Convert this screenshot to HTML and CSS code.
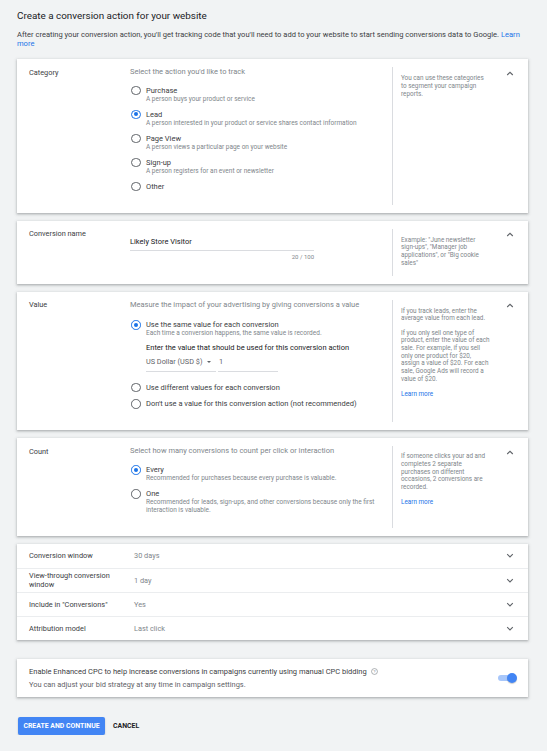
FILE: index.html
```html
<!DOCTYPE html>
<html>
<head>
<meta charset="utf-8">
<link rel="stylesheet" href="styles.css">
</head>
<body>
<div class="page">
  <h1 class="title">Create a conversion action for your website</h1>
  <p class="intro">After creating your conversion action, you'll get tracking code that you'll need to add to your website to start sending conversions data to Google. <a class="link">Learn</a><br><a class="link">more</a></p>

  <section class="card section">
    <div class="label">Category</div>
    <div class="content">
      <div class="prompt">Select the action you'd like to track</div>
      <div class="options opts-cat">
        <div class="option"><span class="radio"></span><div><div class="opt-title">Purchase</div><div class="opt-desc">A person buys your product or service</div></div></div>
        <div class="option"><span class="radio on"></span><div><div class="opt-title">Lead</div><div class="opt-desc">A person interested in your product or service shares contact information</div></div></div>
        <div class="option"><span class="radio"></span><div><div class="opt-title">Page View</div><div class="opt-desc">A person views a particular page on your website</div></div></div>
        <div class="option"><span class="radio"></span><div><div class="opt-title">Sign-up</div><div class="opt-desc">A person registers for an event or newsletter</div></div></div>
        <div class="option"><span class="radio"></span><div><div class="opt-title">Other</div></div></div>
      </div>
    </div>
    <div class="helper helper-cat"><p>You can use these categories<br>to segment your campaign<br>reports.</p></div>
    <div class="chev"><svg viewBox="0 0 8 5" width="8" height="5"><polyline points="1.2,4 4,1.3 6.8,4" fill="none" stroke="#5f6368" stroke-width="1.1"/></svg></div>
  </section>

  <section class="card section">
    <div class="label">Conversion name</div>
    <div class="content content-name">
      <div class="name-input">Likely Store Visitor</div>
      <div class="counter">20 / 100</div>
    </div>
    <div class="helper helper-name"><p>Example: "June newsletter<br>sign-ups", "Manager job<br>applications", or "Big cookie<br>sales"</p></div>
    <div class="chev"><svg viewBox="0 0 8 5" width="8" height="5"><polyline points="1.2,4 4,1.3 6.8,4" fill="none" stroke="#5f6368" stroke-width="1.1"/></svg></div>
  </section>

  <section class="card section">
    <div class="label">Value</div>
    <div class="content">
      <div class="prompt">Measure the impact of your advertising by giving conversions a value</div>
      <div class="options opts-val">
        <div class="option"><span class="radio on"></span><div>
          <div class="opt-title">Use the same value for each conversion</div>
          <div class="opt-desc">Each time a conversion happens, the same value is recorded.</div>
          <div class="enter">Enter the value that should be used for this conversion action</div>
          <div class="value-row">
            <div class="currency">US Dollar (USD $)<span class="caret"></span></div>
            <div class="amount">1</div>
          </div>
        </div></div>
        <div class="option first-single"><span class="radio"></span><div class="opt-title">Use different values for each conversion</div></div>
        <div class="option"><span class="radio"></span><div class="opt-title">Don't use a value for this conversion action (not recommended)</div></div>
      </div>
    </div>
    <div class="helper helper-val">
      <p>If you track leads, enter the<br>average value from each lead.</p>
      <p class="para-gap">If you only sell one type of<br>product, enter the value of each<br>sale. For example, if you sell<br>only one product for $20,<br>assign a value of $20. For each<br>sale, Google Ads will record a<br>value of $20.</p>
      <p class="more-gap"><a class="link">Learn more</a></p>
    </div>
    <div class="chev"><svg viewBox="0 0 8 5" width="8" height="5"><polyline points="1.2,4 4,1.3 6.8,4" fill="none" stroke="#5f6368" stroke-width="1.1"/></svg></div>
  </section>

  <section class="card section">
    <div class="label">Count</div>
    <div class="content">
      <div class="prompt">Select how many conversions to count per click or interaction</div>
      <div class="options opts-count">
        <div class="option"><span class="radio on"></span><div><div class="opt-title">Every</div><div class="opt-desc">Recommended for purchases because every purchase is valuable.</div></div></div>
        <div class="option"><span class="radio"></span><div><div class="opt-title">One</div><div class="opt-desc">Recommended for leads, sign-ups, and other conversions because only the first interaction is valuable.</div></div></div>
      </div>
    </div>
    <div class="helper helper-count">
      <p>If someone clicks your ad and<br>completes 2 separate<br>purchases on different<br>occasions, 2 conversions are<br>recorded.</p>
      <p class="more-gap2"><a class="link">Learn more</a></p>
    </div>
    <div class="chev"><svg viewBox="0 0 8 5" width="8" height="5"><polyline points="1.2,4 4,1.3 6.8,4" fill="none" stroke="#5f6368" stroke-width="1.1"/></svg></div>
  </section>

  <section class="card settings">
    <div class="row"><div class="row-label">Conversion window</div><div class="row-value">30 days</div><div class="row-chev"><svg viewBox="0 0 8 5" width="8" height="5"><polyline points="1.2,1.2 4,3.9 6.8,1.2" fill="none" stroke="#5f6368" stroke-width="1.1"/></svg></div></div>
    <div class="row"><div class="row-label">View-through conversion window</div><div class="row-value">1 day</div><div class="row-chev"><svg viewBox="0 0 8 5" width="8" height="5"><polyline points="1.2,1.2 4,3.9 6.8,1.2" fill="none" stroke="#5f6368" stroke-width="1.1"/></svg></div></div>
    <div class="row"><div class="row-label">Include in "Conversions"</div><div class="row-value">Yes</div><div class="row-chev"><svg viewBox="0 0 8 5" width="8" height="5"><polyline points="1.2,1.2 4,3.9 6.8,1.2" fill="none" stroke="#5f6368" stroke-width="1.1"/></svg></div></div>
    <div class="row"><div class="row-label">Attribution model</div><div class="row-value">Last click</div><div class="row-chev"><svg viewBox="0 0 8 5" width="8" height="5"><polyline points="1.2,1.2 4,3.9 6.8,1.2" fill="none" stroke="#5f6368" stroke-width="1.1"/></svg></div></div>
  </section>

  <section class="card ecpc">
    <div class="ecpc-text">
      <div class="ecpc-main">Enable Enhanced CPC to help increase conversions in campaigns currently using manual CPC bidding <svg class="help" viewBox="0 0 10 10" width="7" height="7"><circle cx="5" cy="5" r="4.2" fill="none" stroke="#80868b" stroke-width="0.9"/><text x="5" y="7.2" text-anchor="middle" font-size="6.2" font-family="Roboto, sans-serif" fill="#80868b">?</text></svg></div>
      <div class="ecpc-sub">You can adjust your bid strategy at any time in campaign settings.</div>
    </div>
    <div class="toggle"><span class="track"></span><span class="thumb"></span></div>
  </section>

  <div class="actions">
    <button class="btn-primary">CREATE AND CONTINUE</button>
    <button class="btn-text">CANCEL</button>
  </div>
</div>
</body>
</html>
```

FILE: styles.css
```css
* { box-sizing: border-box; }
body {
  margin: 0;
  background: #f1f3f4;
  font-family: Roboto, "Noto Sans", Arial, sans-serif;
  color: #3c4043;
}
p { margin: 0; }
.page {
  padding: 9px 19px 0 17px;
}
.title {
  margin: 0;
  font-size: 9.9px;
  line-height: 14px;
  font-weight: 400;
  color: #202124;
}
.intro {
  margin-top: 6.5px;
  font-size: 7.55px;
  line-height: 9px;
  color: #3c4043;
}
.link { color: #1a73e8; text-decoration: none; cursor: pointer; }

.card {
  background: #fff;
  box-shadow: 0 1px 2px rgba(60,64,67,.3), 0 1px 3px 1px rgba(60,64,67,.12);
  margin-bottom: 8px;
}
.intro + .card { margin-top: 11.5px; }

.section {
  display: grid;
  grid-template-columns: 101px 262px 1fr 24px;
  padding: 8px 6px 8px 12px;
}
.label {
  font-size: 7.35px;
  line-height: 9px;
  padding-top: 0.5px;
  color: #3c4043;
}
.content { padding-bottom: 13.5px; }
.prompt {
  font-size: 7.5px;
  line-height: 9px;
  color: #80868b;
}
.options { display: flex; flex-direction: column; gap: 7px; }
.opts-cat { margin-top: 9.5px; }
.opts-val { margin-top: 11.5px; }
.opts-count { margin-top: 10px; }
.option {
  display: grid;
  grid-template-columns: 16px 1fr;
}
.radio {
  width: 9.5px;
  height: 9.5px;
  margin-left: 1.3px;
  border: 1px solid #5f6368;
  border-radius: 50%;
  position: relative;
}
.radio.on { border-color: #1a73e8; }
.radio.on::after {
  content: "";
  position: absolute;
  left: 1.6px; top: 1.6px;
  width: 4.3px; height: 4.3px;
  border-radius: 50%;
  background: #1a73e8;
}
.opt-title {
  font-size: 7.5px;
  line-height: 9px;
  color: #3c4043;
}
.opt-desc {
  font-size: 6.5px;
  line-height: 8px;
  color: #80868b;
}
.opts-count .opt-desc { max-width: 234px; }
.first-single { margin-top: 4px; }
.enter {
  margin-top: 6px;
  font-size: 7.5px;
  line-height: 9px;
  color: #202124;
}
.value-row {
  display: flex;
  gap: 2px;
  margin-top: 5px;
}
.currency, .amount {
  font-size: 7.3px;
  line-height: 9px;
  padding-bottom: 4.5px;
  border-bottom: 1px solid #dadce0;
  color: #5f6368;
}
.currency { width: 70px; display: flex; align-items: center; }
.caret {
  margin-left: 5px;
  width: 0; height: 0;
  border-left: 2.3px solid transparent;
  border-right: 2.3px solid transparent;
  border-top: 2.5px solid #5f6368;
}
.amount { width: 60px; padding-left: 1px; }

.content-name { padding-top: 8.5px; padding-bottom: 15px; }
.name-input {
  width: 184px;
  font-size: 7.5px;
  line-height: 9px;
  padding-bottom: 3.5px;
  border-bottom: 1px solid #dadce0;
  color: #202124;
}
.counter {
  width: 184px;
  text-align: right;
  margin-top: 2px;
  font-size: 6px;
  line-height: 8px;
  color: #80868b;
}

.helper {
  border-left: 1px solid #dadce0;
  padding: 8.15px 4px 0 8px;
  font-size: 6.35px;
  line-height: 7.7px;
  color: #80868b;
  white-space: nowrap;
}
.helper p.para-gap { margin-top: 6.6px; }
.helper p.more-gap { margin-top: 7.1px; }
.helper p.more-gap2 { margin-top: 7.5px; }
.helper-count { padding-top: 7.15px; }

.chev {
  display: flex;
  justify-content: center;
  padding-top: 3.5px;
}
.chev svg { display: block; }

.settings { margin-bottom: 19px; }
.row {
  display: grid;
  grid-template-columns: 105px 1fr 24px;
  align-items: center;
  height: 24px;
  padding: 0 6px 0 12px;
  border-top: 1px solid #ebedef;
}
.row:first-child { border-top: none; }
.row-label {
  font-size: 7.35px;
  line-height: 9px;
  padding-right: 12px;
  color: #3c4043;
}
.row-value {
  font-size: 7.35px;
  line-height: 9px;
  color: #80868b;
}
.row-chev { display: flex; justify-content: center; }
.row-chev svg { display: block; }

.ecpc {
  display: flex;
  align-items: center;
  justify-content: space-between;
  padding: 8.5px 11px 7.5px 12px;
  margin-bottom: 20px;
}
.ecpc-main {
  font-size: 7.5px;
  line-height: 9px;
  color: #3c4043;
  display: flex;
  align-items: center;
  gap: 4px;
}
.help { display: block; }
.ecpc-sub {
  margin-top: 4px;
  font-size: 7.45px;
  line-height: 9px;
  color: #5f6368;
}
.toggle {
  position: relative;
  width: 19px;
  height: 10px;
}
.track {
  position: absolute;
  left: 0; top: 1.7px;
  width: 17px; height: 6.6px;
  border-radius: 4px;
  background: #a8c7fa;
}
.thumb {
  position: absolute;
  right: 0; top: -0.5px;
  width: 10px; height: 10px;
  border-radius: 50%;
  background: #4285f4;
  box-shadow: 0 1px 1px rgba(0,0,0,.2);
}

.actions {
  display: flex;
  align-items: center;
  gap: 8px;
  padding-left: 1px;
}
button {
  font-family: Roboto, Arial, sans-serif;
  border: none;
  cursor: pointer;
}
.btn-primary {
  width: 87px;
  height: 18px;
  padding: 0;
  border-radius: 2px;
  background: #4285f4;
  color: #fff;
  font-size: 6.9px;
  font-weight: 700;
  box-shadow: 0 1px 2px rgba(0,0,0,.2);
}
.btn-text {
  background: none;
  padding: 0;
  color: #202124;
  font-size: 6.9px;
  font-weight: 700;
}
```
